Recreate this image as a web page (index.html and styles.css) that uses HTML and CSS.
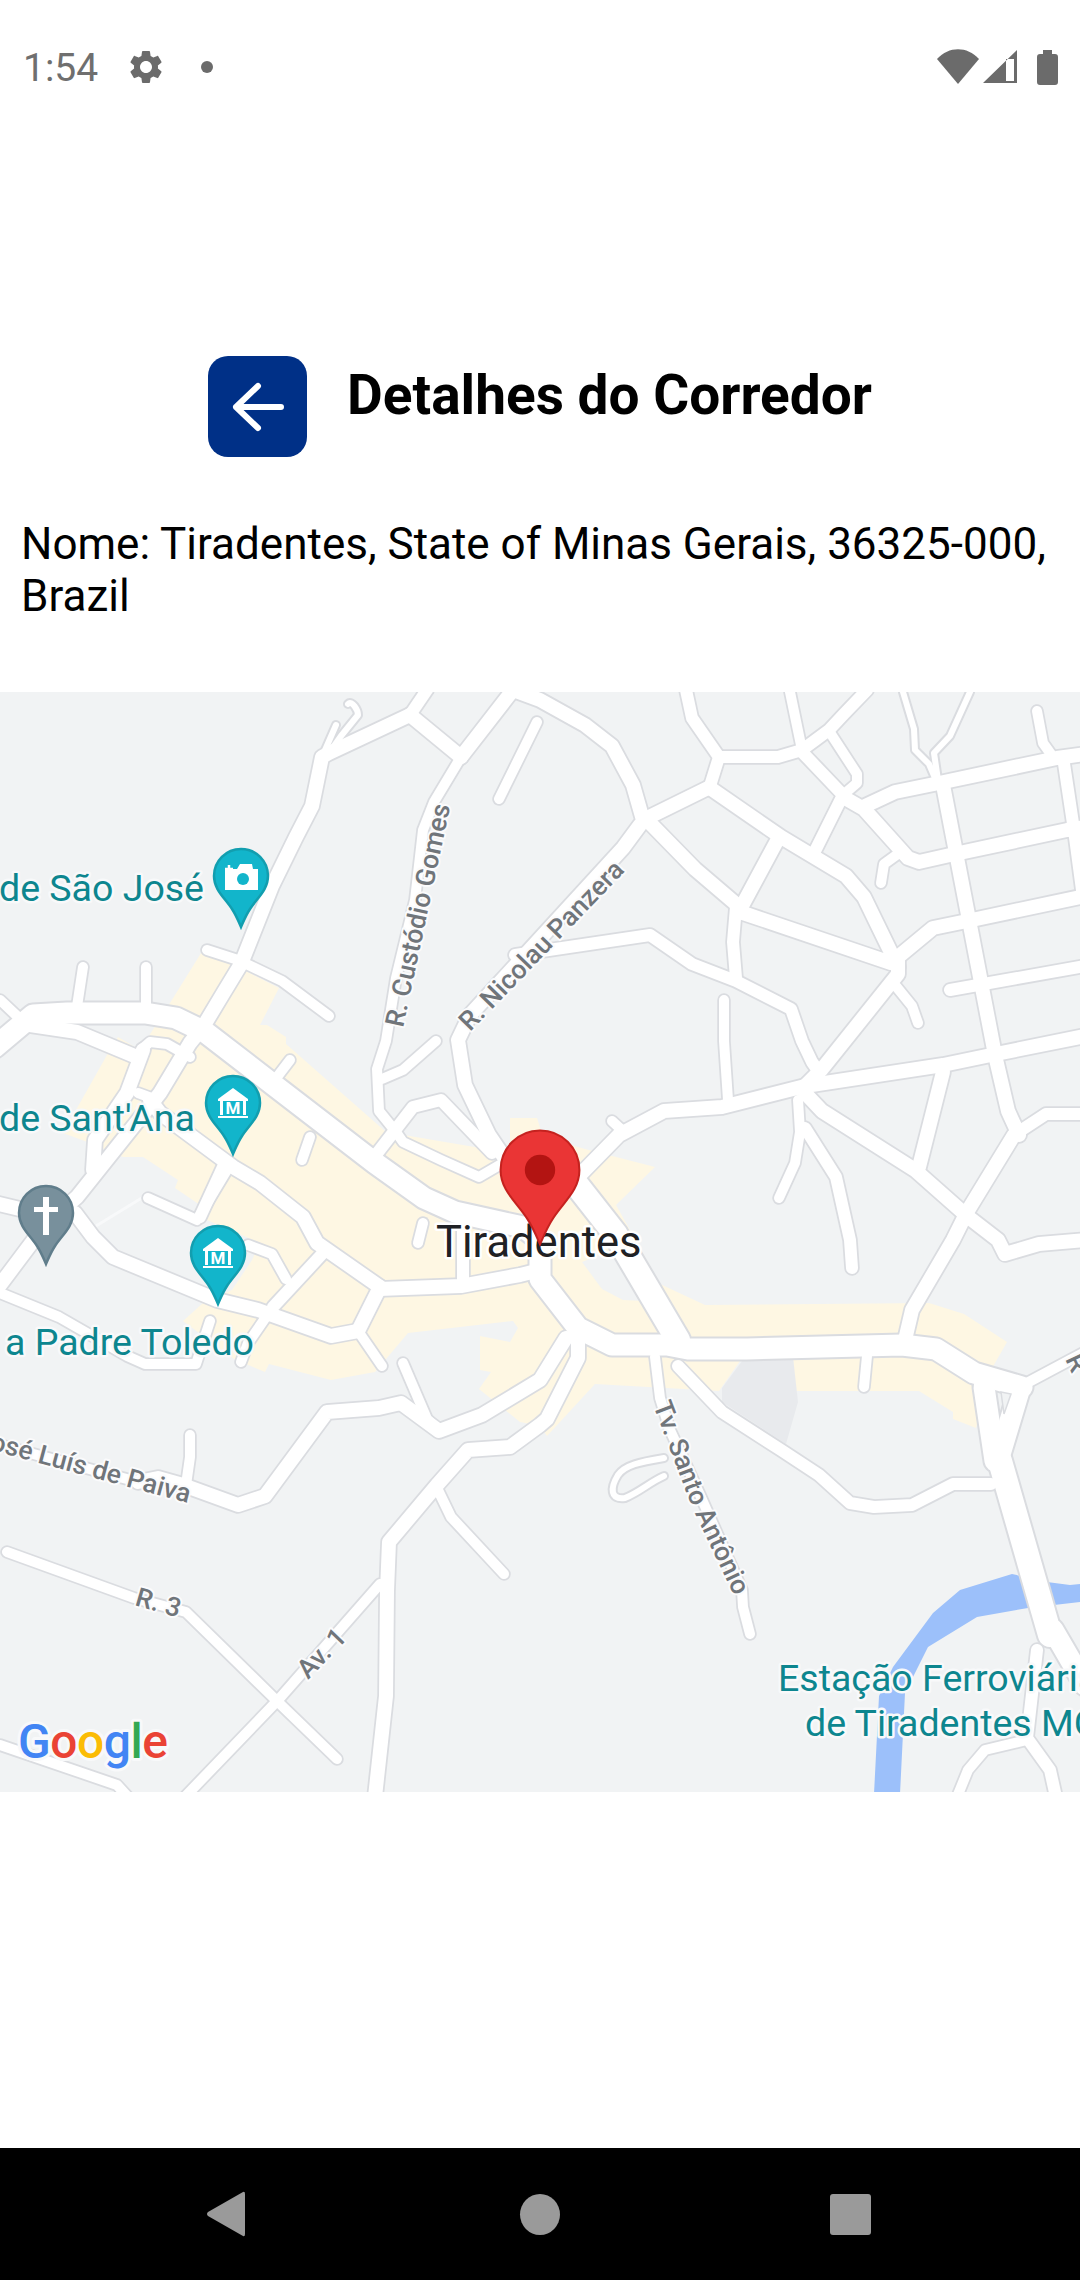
FILE: index.html
```html
<!DOCTYPE html>
<html lang="pt">
<head>
<meta charset="utf-8">
<title>Detalhes do Corredor</title>
<link rel="stylesheet" href="styles.css">
</head>
<body>
<div class="screen">
  <div class="status">
    <span class="time">1:54</span>
    <svg class="gear" viewBox="0 0 24 24"><path d="M19.14 12.94c.04-.3.06-.61.06-.94 0-.32-.02-.64-.07-.94l2.03-1.58c.18-.14.23-.41.12-.61l-1.92-3.32c-.12-.22-.37-.29-.59-.22l-2.39.96c-.5-.38-1.03-.7-1.62-.94l-.36-2.54c-.04-.24-.24-.41-.48-.41h-3.84c-.24 0-.43.17-.47.41l-.36 2.54c-.59.24-1.13.57-1.62.94l-2.39-.96c-.22-.08-.47 0-.59.22L2.74 8.87c-.12.21-.08.47.12.61l2.03 1.58c-.05.3-.09.63-.09.94s.02.64.07.94l-2.03 1.58c-.18.14-.23.41-.12.61l1.92 3.32c.12.22.37.29.59.22l2.39-.96c.5.38 1.03.7 1.62.94l.36 2.54c.05.24.24.41.48.41h3.84c.24 0 .44-.17.47-.41l.36-2.54c.59-.24 1.13-.56 1.62-.94l2.39.96c.22.08.47 0 .59-.22l1.92-3.32c.12-.22.07-.47-.12-.61l-2.01-1.58zM12 15.6c-1.98 0-3.6-1.62-3.6-3.6s1.62-3.6 3.6-3.6 3.6 1.62 3.6 3.6-1.62 3.6-3.6 3.6z"/></svg>
    <span class="dot"></span>
    <span class="grow"></span>
    <svg class="wifi" viewBox="0 0 42 36"><path d="M0 10 C12 -3 30 -3 42 10 L21 35 Z"/></svg>
    <svg class="signal" viewBox="0 0 34 34"><path fill-rule="evenodd" d="M0 33 L34 0 V33 Z M23 9 V31 H31 V9 Z"/></svg>
    <svg class="battery" viewBox="0 0 21 35"><path d="M6 0 H15 V4 H18 Q21 4 21 7 V32 Q21 35 18 35 H3 Q0 35 0 32 V7 Q0 4 3 4 H6 Z"/></svg>
  </div>

  <div class="topbar">
    <button class="back-btn" type="button" aria-label="Voltar">
      <svg viewBox="0 0 60 60"><path d="M53 30 H8 M30 9 L8 30 L30 51"/></svg>
    </button>
    <h1 class="title">Detalhes do Corredor</h1>
  </div>

  <p class="name">Nome: Tiradentes, State of Minas Gerais, 36325-000, Brazil</p>

  <svg class="map" viewBox="0 692 1080 1100" xmlns="http://www.w3.org/2000/svg">
    <defs>
      <g id="w7">
        <path d="M348,704 C352,700 358,710 358,715 L341,736 L329,753"/>
        <path d="M336,725 L322,757"/>
        <path d="M664,1458 C640,1462 625,1465 618,1475 C610,1488 610,1500 625,1498 C640,1492 650,1482 664,1476"/>
        <path d="M903,692 L914,729 L915,750 L929,764 L938,785"/>
        <path d="M970,692 L950,736 L934,753 L938,780"/>
      </g>
      <g id="w10">
        <path d="M0,1000 L17,1016"/>
        <path d="M461,757 L434,802 L423,830 L415,900 L396,978 L386,1041 L377,1069 L379,1111 L396,1132"/>
        <path d="M396,1132 L403,1142 L441,1160 L479,1177 L503,1163 L540,1150"/>
        <path d="M382,1079 L403,1070 L436,1041"/>
        <path d="M499,799 L537,722"/>
        <path d="M207,950 L238,960 L282,981 L329,1016"/>
        <path d="M146,967 L146,1013"/>
        <path d="M83,967 L76,1013"/>
        <path d="M137,1057 L143,1048 L150,1042 L167,1044 L190,1057"/>
        <path d="M138,1093 L157,1100"/>
        <path d="M423,1223 L418,1243"/>
        <path d="M310,1137 L302,1160"/>
        <path d="M290,1060 L277,1077"/>
        <path d="M148,1198 L197,1220 L227,1170"/>
        <path d="M273,1307 L248,1343 L241,1362"/>
        <path d="M248,1245 L272,1254 L286,1279"/>
        <path d="M0,1293 L59,1317 L127,1356 L145,1364 L196,1364 L210,1321"/>
        <path d="M358,1331 L382,1366"/>
        <path d="M403,1363 L427,1419 L439,1431"/>
        <path d="M0,1445 L138,1482"/>
        <path d="M190,1435 L190,1457 L186,1485"/>
        <path d="M790,692 L802,750"/>
        <path d="M829,731 L857,774 L857,783 L843,795"/>
        <path d="M724,1000 L724,1041 L728,1100"/>
        <path d="M612,1121 L624,1132"/>
        <path d="M895,985 L912,1006 L918,1023"/>
        <path d="M881,883 L884,864 L902,851"/>
        <path d="M1037,711 L1043,743 L1053,757"/>
        <path d="M798,1100 L800,1132 L795,1163 L779,1198"/>
        <path d="M655,1357 L660,1398 L670,1430 L700,1495 L742,1590 L743,1607 L750,1634"/>
        <path d="M867,1356 L864,1387"/>
        <path d="M1025,1384 L1070,1360 L1085,1352"/>
        <path d="M1027,1740 L985,1750 L968,1770 L957,1797"/>
        <path d="M7,1552 L134,1598 L186,1612 L279,1703 L337,1759"/>
        <path d="M380,1584 L279,1699 L180,1802"/>
        <path d="M437,1488 L451,1517 L504,1574"/>
        <path d="M0,1745 L117,1785 L128,1797"/>
      </g>
      <g id="w12">
        <path d="M410,715 L427,690"/>
        <path d="M375,1156 L413,1107 L441,1100 L492,1153"/>
        <path d="M223,1167 L200,1217"/>
        <path d="M323,1253 L273,1307"/>
        <path d="M463,1280 L463,1227"/>
        <path d="M710,786 L719,757 L692,718 L686,690"/>
        <path d="M719,757 L778,757 L802,750 L829,730 L843,715 L867,690"/>
        <path d="M802,752 L843,795 L815,851"/>
        <path d="M736,907 L733,942 L736,978"/>
        <path d="M515,955 L650,935 L692,964 L736,981 L791,1009 L802,1041 L812,1062 L819,1072"/>
        <path d="M950,990 L1085,966"/>
        <path d="M1063,757 L1074,830 L1082,890"/>
        <path d="M1014,1135 L1046,1114 L1085,1114"/>
        <path d="M805,1128 L836,1177 L850,1240 L852,1268"/>
        <path d="M678,1366 L722,1412 L781,1450 L819,1475 L850,1503 L874,1507 L912,1505 L953,1484 L991,1484"/>
        <path d="M1037,1650 L1027,1738 L1050,1770 L1056,1797"/>
      </g>
      <g id="w14">
        <path d="M410,715 L329,753 L322,757 L312,806 L296,837 L272,886 L241,964 L224,992 L203,1027 L190,1043 L160,1093 L77,1197 L45,1225 L0,1285"/>
        <path d="M410,715 L461,757"/>
        <path d="M461,757 L513,690"/>
        <path d="M513,690 L540,700 L585,725 L612,746 L633,785 L643,820"/>
        <path d="M640,825 L623,848 L470,1015 L458,1040 L465,1085 L489,1135 L506,1160"/>
        <path d="M30,1025 L77,1032 L137,1057"/>
        <path d="M143,1050 L127,1093 L95,1140 L93,1170"/>
        <path d="M150,1100 L160,1113 L233,1167 L260,1183 L303,1217 L317,1243 L380,1287"/>
        <path d="M380,1287 L358,1331"/>
        <path d="M379,1289 L461,1286 L520,1275 L540,1270"/>
        <path d="M-5,1203 L45,1215 L75,1213 L93,1237 L113,1257 L217,1300 L258,1310 L331,1336 L358,1331"/>
        <path d="M138,1482 L158,1478 L183,1485 L238,1505 L265,1496 L327,1412 L379,1408 L401,1403 L439,1431 L482,1415 L540,1380 L566,1338"/>
        <path d="M578,1338 L578,1358 L547,1419 L540,1425 L510,1447 L468,1450 L437,1485 L389,1542 L387,1591 L386,1696 L375,1797"/>
        <path d="M643,820 L710,787"/>
        <path d="M843,797 L864,809 L908,858 L919,862 L950,855 L1067,830 L1085,827"/>
        <path d="M865,806 L895,792 L939,783 L1057,758 L1085,754"/>
        <path d="M710,788 L781,837 L846,876 L864,897 L898,967"/>
        <path d="M650,823 L695,869 L736,904 L743,913 L891,963"/>
        <path d="M778,839 L743,904"/>
        <path d="M574,1181 L619,1135 L664,1111 L722,1107 L805,1086 L943,1065 L991,1055 L1085,1036"/>
        <path d="M898,957 L898,974 L822,1069 L812,1079 L805,1086"/>
        <path d="M898,957 L933,928 L967,921 L1085,896"/>
        <path d="M943,785 L995,1055 L1008,1111 L1019,1135"/>
        <path d="M943,1072 L919,1167"/>
        <path d="M805,1093 L822,1111 L915,1170 L967,1216 L998,1240 L1005,1254 L1039,1244 L1085,1240"/>
        <path d="M1014,1135 L967,1212 L953,1240 L912,1310 L905,1340"/>
      </g>
      <g id="w20">
        <path d="M-5,1047 L33,1015 L67,1013 L145,1013 L176,1018 L205,1032 L275,1086 L375,1163 L424,1198 L455,1212 L523,1227 L540,1240 L540,1279 L578,1328 L612,1345 L667,1345 L688,1349 L747,1349 L902,1345 L936,1349 L974,1373 L1022,1387"/>
        <path d="M984,1387 L995,1461"/>
        <path d="M1019,1391 L998,1461"/>
        <path d="M1053,1630 L1085,1685"/>
      </g>
      <g id="w24">
        <path d="M1000,1461 L1050,1635"/>
        <path d="M565,1170 L616,1235 L678,1340"/>
      </g>
      <path id="pin" d="M0,-27 C15,-27 27,-15 27,0 C27,14 16,22 9,33 C5,39 3,44 0,51 C-3,44 -5,39 -9,33 C-16,22 -27,14 -27,0 C-27,-15 -15,-27 0,-27 Z"/>
      <g id="museum">
        <path class="ico-fill" d="M0,-15 L15,-4 V-2 H-15 V-4 Z"/>
        <path class="ico-fill" d="M-13,-2 H-10 V12 H-13 Z M10,-2 H13 V12 H10 Z M-15,13 H15 V15 H-15 Z"/>
        <text class="pin-m" x="0" y="11">M</text>
      </g>
      <path id="tv" d="M653,1405 L692,1507 L736,1600"/>
    </defs>

    <rect class="ground" x="0" y="692" width="1080" height="1100"/>
    <polygon class="urban" points="203,950 231,964 244,970 279,988 260,1025 267,1025 286,1037 286,1044 386,1132 510,1153 510,1118 537,1118 543,1137 585,1149 655,1167 616,1205 660,1284 705,1305 929,1303 964,1314 1007,1342 991,1370 976,1428 953,1419 953,1412 919,1391 795,1391 793,1359 740,1361 719,1391 595,1384 547,1436 540,1426 520,1422 479,1389 491,1372 480,1370 480,1336 510,1342 518,1328 513,1321 408,1333 375,1372 331,1380 269,1364 265,1372 234,1359 183,1321 203,1303 232,1290 252,1260 260,1243 207,1220 203,1207 175,1188 178,1180 143,1157 123,1157 90,1143 63,1133 107,1055 118,1037 140,1050 170,1003"/>
    <polygon class="ground" points="582,1262 602,1289 623,1300 665,1302 640,1255 600,1255"/>
    <polygon class="park" points="722,1388 745,1357 793,1357 798,1402 786,1444 722,1402"/>
    <polygon class="water" points="874,1794 879,1696 893,1667 933,1613 960,1590 1012,1574 1047,1582 1070,1585 1080,1584 1080,1602 1028,1608 977,1617 928,1647 905,1693 900,1794"/>
    <path class="faint" d="M96,1226 L145,1196"/>

    <use href="#w7" class="case c7"/>
    <use href="#w10" class="case c10"/>
    <use href="#w12" class="case c12"/>
    <use href="#w14" class="case c14"/>
    <use href="#w20" class="case c20"/>
    <use href="#w24" class="case c24"/>
    <use href="#w7" class="road c7f"/>
    <use href="#w10" class="road c10f"/>
    <use href="#w12" class="road c12f"/>
    <use href="#w14" class="road c14f"/>
    <use href="#w20" class="road c20f"/>
    <use href="#w24" class="road c24f"/>
    <polygon class="case-island" points="1001,1392 1011,1394 1004,1414"/>

    <text class="street" transform="translate(403,1028) rotate(-78)">R. Custódio Gomes</text>
    <text class="street" transform="translate(470,1032) rotate(-46)">R. Nicolau Panzera</text>
    <text class="street"><textPath href="#tv">Tv. Santo Antônio</textPath></text>
    <text class="street end" transform="translate(188,1503) rotate(15)">José Luís de Paiva</text>
    <text class="street" transform="translate(134,1605) rotate(16)">R. 3</text>
    <text class="street" transform="translate(308,1680) rotate(-46)">Av. 1</text>
    <text class="street" transform="translate(1065,1359) rotate(65)">R</text>

    <text class="poi" x="-1" y="901">de São José</text>
    <text class="poi" x="-1" y="1131">de Sant'Ana</text>
    <text class="poi end" x="254" y="1355">a Padre Toledo</text>
    <text class="poi" x="778" y="1691">Estação Ferroviária</text>
    <text class="poi" x="805" y="1736">de Tiradentes MG</text>

    <g transform="translate(241,876)">
      <use href="#pin" class="pin-teal"/>
      <path class="ico-fill" d="M-16,-7 H-4 L-1,-12 H11 L12,-7 H17 V14 H-16 Z"/>
      <circle class="lens" cx="2" cy="3" r="6"/>
      <path class="plus" d="M-12,-11 V-3 M-16,-7 H-8"/>
    </g>
    <g transform="translate(233,1103)">
      <use href="#pin" class="pin-teal"/>
      <use href="#museum"/>
    </g>
    <g transform="translate(218,1253)">
      <use href="#pin" class="pin-teal"/>
      <use href="#museum"/>
    </g>
    <g transform="translate(46,1213)">
      <use href="#pin" class="pin-grey"/>
      <path class="ico-fill" d="M-3,-16 H3 V22 H-3 Z M-12,-6 H12 V-1 H-12 Z"/>
    </g>

    <text class="place" x="436" y="1257">Tiradentes</text>
    <g transform="translate(540,1170) scale(1.46)">
      <use href="#pin" class="pin-red"/>
      <circle class="pin-red-dot" cx="0" cy="0" r="10.4"/>
    </g>

    <text class="google" x="18" y="1758"><tspan class="g-b">G</tspan><tspan class="g-r">o</tspan><tspan class="g-y">o</tspan><tspan class="g-b">g</tspan><tspan class="g-g">l</tspan><tspan class="g-r">e</tspan></text>
  </svg>

  <div class="grow"></div>

  <nav class="navbar">
    <svg class="nav-back" viewBox="0 0 38 46"><path d="M36 1 Q38 0 38 3 V43 Q38 46 36 45 L1 25 Q-1 23 1 21 Z"/></svg>
    <span class="nav-home"></span>
    <span class="nav-recent"></span>
  </nav>
</div>
</body>
</html>
```

FILE: styles.css
```css
* { box-sizing: border-box; }
html, body { margin: 0; padding: 0; background: #fff; }
.screen {
  width: 1080px;
  height: 2280px;
  display: flex;
  flex-direction: column;
  overflow: hidden;
  font-family: Roboto, "Liberation Sans", sans-serif;
}
.grow { flex: 1; }

.status {
  height: 134px;
  display: flex;
  align-items: center;
  padding: 0 22px 0 23px;
  flex: none;
}
.status svg { fill: #6b6b6b; display: block; flex: none; }
.time { font-size: 39px; color: #6f6f6f; width: 103px; line-height: 1; position: relative; top: 1px; }
.gear { width: 40px; height: 40px; }
.dot { width: 12px; height: 12px; border-radius: 50%; background: #6b6b6b; margin-left: 35px; }
.wifi { width: 42px; height: 36px; }
.signal { width: 34px; height: 34px; margin-left: 4px; }
.battery { width: 21px; height: 35px; margin-left: 20px; }

.topbar {
  display: flex;
  justify-content: center;
  align-items: flex-start;
  gap: 40px;
  margin-top: 222px;
  flex: none;
}
.back-btn {
  width: 99px;
  height: 101px;
  padding: 0;
  border: 0;
  border-radius: 20px;
  background: #003087;
  display: flex;
  align-items: center;
  justify-content: center;
}
.back-btn svg { width: 60px; height: 60px; display: block; fill: none; stroke: #fff; stroke-width: 6; stroke-linecap: round; stroke-linejoin: round; }
.title { margin: 9px 0 0; font-size: 55px; font-weight: 700; line-height: 60px; color: #000; white-space: nowrap; }

.name {
  margin: 61px 0 0;
  padding: 0 21px;
  font-size: 44px;
  line-height: 52px;
  color: #000;
  height: 174px;
  flex: none;
}

.map { display: block; width: 1080px; height: 1100px; flex: none; }
.ground { fill: #f1f3f4; }
.urban { fill: #fef7e3; }
.park { fill: #e8eaed; }
.water { fill: #9cc0fa; }
.faint { fill: none; stroke: #f8f9fa; stroke-width: 3; }
.case, .road { fill: none; stroke-linecap: round; stroke-linejoin: round; }
.case { stroke: #dadce0; }
.road { stroke: #fff; }
.c7 { stroke-width: 10; } .c7f { stroke-width: 6; }
.c10 { stroke-width: 13.5; } .c10f { stroke-width: 10; }
.c12 { stroke-width: 15.5; } .c12f { stroke-width: 12; }
.c14 { stroke-width: 17.5; } .c14f { stroke-width: 14; }
.c20 { stroke-width: 25; } .c20f { stroke-width: 21; }
.c24 { stroke-width: 28; } .c24f { stroke-width: 24; }
.case-island { fill: #f1f3f4; stroke: #dadce0; stroke-width: 1.5; }

.street {
  font-family: Roboto, sans-serif;
  font-size: 26.5px;
  font-weight: 500;
  fill: #70757a;
  stroke: #fbfbfc;
  stroke-width: 4px;
  paint-order: stroke;
  stroke-linejoin: round;
}
.poi {
  font-family: Roboto, sans-serif;
  font-size: 37.5px;
  fill: #0d868f;
  stroke: #f8f9fa;
  stroke-width: 5px;
  paint-order: stroke;
  stroke-linejoin: round;
}
.end { text-anchor: end; }
.place {
  font-family: Roboto, sans-serif;
  font-size: 43.5px;
  fill: #202124;
  stroke: #ffffff;
  stroke-width: 5px;
  paint-order: stroke;
  stroke-linejoin: round;
}

.pin-teal { fill: #12b5cb; stroke: #129eaf; stroke-width: 2.5; }
.pin-grey { fill: #78909c; stroke: #607d8b; stroke-width: 2.5; }
.pin-red { fill: #ea3535; stroke: #c5221f; stroke-width: 1.4; }
.pin-red-dot { fill: #b31412; }
.ico-fill { fill: #fff; }
.lens { fill: #12b5cb; }
.plus { fill: none; stroke: #fff; stroke-width: 2.5; }
.pin-m { font-family: Roboto, sans-serif; font-size: 17px; font-weight: 700; fill: #fff; text-anchor: middle; }

.google {
  font-family: Roboto, sans-serif;
  font-size: 48px;
  font-weight: 500;
  letter-spacing: -0.5px;
  stroke: #f8f9fa;
  stroke-width: 6px;
  paint-order: stroke;
  stroke-linejoin: round;
}
.g-b { fill: #4285f4; }
.g-r { fill: #ea4335; }
.g-y { fill: #fbbc05; }
.g-g { fill: #34a853; }

.navbar {
  height: 132px;
  flex: none;
  background: #000;
  display: flex;
  align-items: center;
  padding-left: 207px;
}
.nav-back { width: 38px; height: 46px; fill: #9a9a9a; display: block; }
.nav-home { width: 40px; height: 41px; border-radius: 50%; background: #9a9a9a; margin-left: 275px; }
.nav-recent { width: 41px; height: 41px; border-radius: 3px; background: #9a9a9a; margin-left: 270px; }
```
